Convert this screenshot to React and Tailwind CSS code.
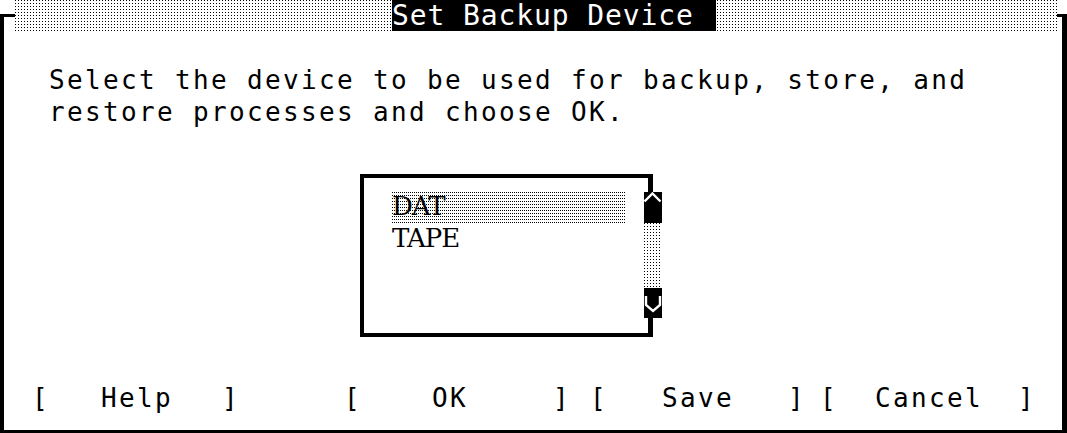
import React from "react";

const mono = { fontFamily: '"DejaVu Sans Mono", monospace' };
const serif = { fontFamily: '"DejaVu Serif", "Liberation Serif", serif' };

function UpArrow() {
  return (
    <svg width="18" height="12" viewBox="0 0 18 12" className="block">
      <polyline points="0.5,9.5 8.5,1.5 16.5,9.5" fill="none" stroke="#fff" strokeWidth="2.4" />
    </svg>
  );
}

function DownArrow() {
  return (
    <svg width="18" height="26" viewBox="0 0 18 26" className="block">
      <polyline points="2,8 2,17 9,23 16,17 16,8" fill="none" stroke="#fff" strokeWidth="2.4" />
    </svg>
  );
}

const buttons = [
  { t: "[", w: 69 },
  { t: "Help", w: 121 },
  { t: "]", w: 122 },
  { t: "[", w: 88 },
  { t: "OK", w: 121 },
  { t: "]", w: 37 },
  { t: "[", w: 72 },
  { t: "Save", w: 126 },
  { t: "]", w: 32 },
  { t: "[", w: 55 },
  { t: "Cancel", w: 143 },
  { t: "]", w: 18 },
];

export default function App() {
  return (
    <div className="relative w-[1067px] h-[433px] bg-white overflow-hidden text-black" style={mono}>
      {/* title bar overlapping the frame */}
      <div className="absolute top-0 left-[15px] w-[1042px] h-[31px] flex bg-[linear-gradient(to_right,transparent_1px,#fff_1px),linear-gradient(to_bottom,#000_1px,#fff_1px)] bg-[length:3px_3px]">
        <div className="ml-[377px] w-[324px] h-[31px] bg-black text-white text-[28px] leading-[31px] tracking-[0.9px] whitespace-pre overflow-hidden">
          Set Backup Device
        </div>
      </div>

      {/* frame */}
      <div className="mt-[14px] h-[419px] border-black border-t-[3px] border-l-4 border-r-[5px] border-b-[3px]">
        <div className="pt-[47px] pl-[45px] text-[26px] leading-[32px] tracking-[2.35px] whitespace-pre">
          <div>Select the device to be used for backup, store, and</div>
          <div>restore processes and choose OK.</div>
        </div>

        {/* list box */}
        <div className="relative mt-[46px] ml-[356px] w-[293px] h-[163px] border-black border-t-4 border-l-4 border-r-[5px] border-b-4">
          <div className="pt-[14px] pl-[28px] text-[26px] leading-[28px] tracking-[-1px]" style={serif}>
            <div className="w-[234px] h-[32px] bg-[linear-gradient(to_right,transparent_1px,#fff_1px),linear-gradient(to_bottom,#000_1px,#fff_1px)] bg-[length:2px_3px]">
              DAT
            </div>
            <div className="h-[32px]">TAPE</div>
          </div>
          <div className="absolute left-[280px] top-[14px] w-[18px] flex flex-col">
            <div className="h-[31px] bg-black">
              <UpArrow />
            </div>
            <div className="h-[65px] bg-[linear-gradient(to_right,transparent_1px,#fff_1px),linear-gradient(to_bottom,#000_1px,#fff_1px)] bg-[length:3px_3px]" />
            <div className="h-[30px] bg-black">
              <DownArrow />
            </div>
          </div>
        </div>

        {/* buttons */}
        <div className="mt-[45px] pl-[28px] flex h-[32px] text-[26px] leading-[32px] tracking-[2.35px] whitespace-pre">
          {buttons.map((b, i) => (
            <span key={i} className="shrink-0" style={{ width: b.w }}>
              {b.t}
            </span>
          ))}
        </div>
      </div>
    </div>
  );
}
